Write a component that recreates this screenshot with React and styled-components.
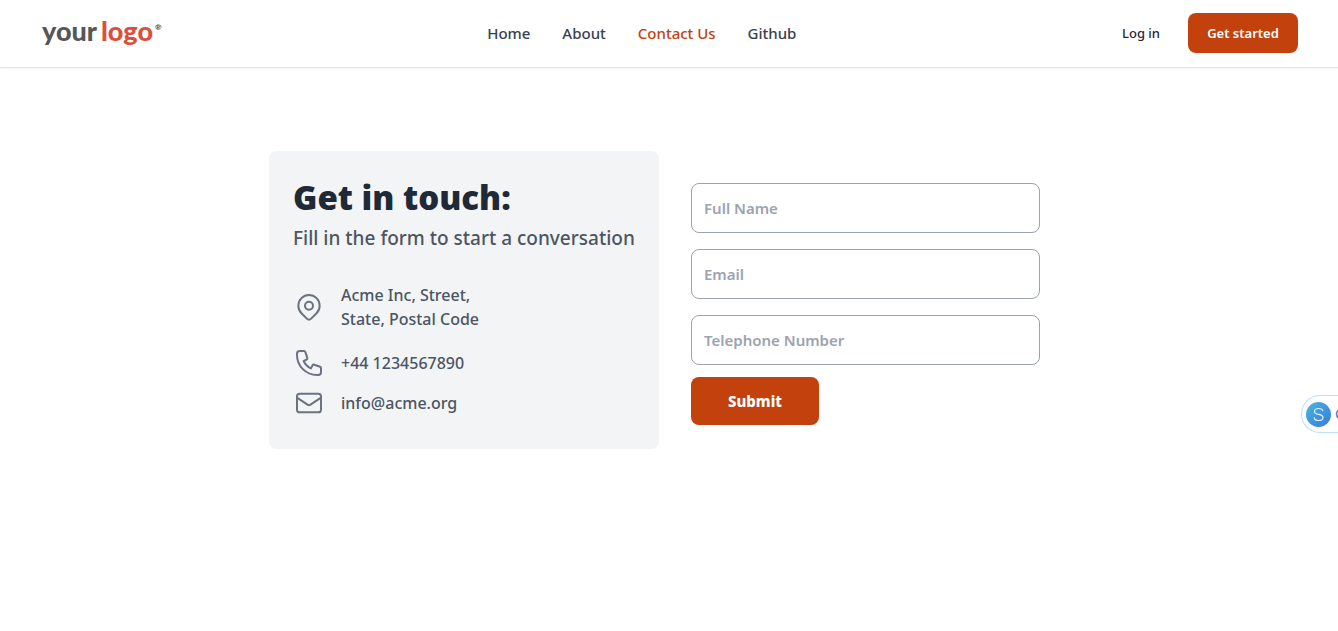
import React from "react";
import styled, { createGlobalStyle } from "styled-components";

const GlobalStyle = createGlobalStyle`
  *, *::before, *::after { box-sizing: border-box; }
  body {
    margin: 0;
    background: #fff;
    color: #1f2937;
    font-family: "Segoe UI", "Noto Sans", "Open Sans", sans-serif;
    font-size: 16px;
    line-height: 24px;
    overflow-x: hidden;
  }
  h1, p, ul { margin: 0; padding: 0; }
  button, input { font: inherit; }
`;

const Header = styled.header`
  display: flex;
  align-items: center;
  justify-content: space-between;
  min-height: 68px;
  padding: 0 40px 2px;
  border-bottom: 1px solid #e5e7eb;
  box-shadow: 0 1px 2px rgba(0, 0, 0, 0.05);
`;

const Logo = styled.a`
  display: flex;
  padding: 0 0 4px 2px;
  color: #555658;
  font-family: Lato, "Open Sans", sans-serif;
  font-size: 27px;
  font-weight: 900;
  line-height: 36px;
  text-decoration: none;
`;

const LogoAccent = styled.span`
  margin-left: 4px;
  color: #dc4f3c;
`;

const LogoMark = styled.span`
  margin-left: 2px;
  font-size: 8px;
  line-height: 28px;
`;

const Nav = styled.nav`
  display: flex;
  gap: 32px;
`;

const NavLink = styled.a`
  color: ${({ $active }) => ($active ? "#c2410c" : "#374151")};
  font-size: 15px;
  font-weight: 500;
  text-decoration: none;
`;

const Actions = styled.div`
  display: flex;
  align-items: center;
  gap: 28px;
`;

const LoginLink = styled.a`
  color: #1f2937;
  font-size: 13px;
  font-weight: 500;
  text-decoration: none;
`;

const Button = styled.button`
  width: ${({ $large }) => ($large ? "128px" : "110px")};
  height: ${({ $large }) => ($large ? "48px" : "40px")};
  padding: 0;
  border: 0;
  border-radius: 8px;
  background: #c2410c;
  color: #fff;
  font-size: ${({ $large }) => ($large ? "15px" : "13px")};
  font-weight: ${({ $large }) => ($large ? 800 : 600)};
  cursor: pointer;
`;

const Main = styled.main`
  display: grid;
  grid-template-columns: 390px minmax(0, 1fr);
  gap: 8px;
  max-width: 800px;
  margin: 83px auto 0;

  @media (max-width: 800px) {
    grid-template-columns: minmax(0, 1fr);
    margin: 32px 16px;
  }
`;

const Card = styled.section`
  padding: 24px;
  border-radius: 8px;
  background: #f3f4f6;
`;

const Title = styled.h1`
  color: #1f2937;
  font-size: 33px;
  font-weight: 900;
  line-height: 45px;
`;

const Lead = styled.p`
  margin-top: 4px;
  color: #4b5563;
  font-size: 19px;
  font-weight: 500;
  line-height: 28px;
  white-space: nowrap;
`;

const ContactList = styled.ul`
  display: grid;
  gap: 8px;
  margin-top: 31px;
  list-style: none;
`;

const ContactItem = styled.li`
  display: flex;
  align-items: center;
  gap: 16px;
  margin-bottom: ${({ $spaced }) => ($spaced ? "8px" : "0")};
  color: #4b5563;
  font-size: 16px;
  font-weight: 500;
`;

const ContactIcon = styled.svg`
  width: 32px;
  height: 32px;
  flex: none;
  fill: none;
  stroke: #6b7280;
  stroke-width: 1.5;
  stroke-linecap: round;
  stroke-linejoin: round;
`;

const Form = styled.form`
  display: flex;
  flex-direction: column;
  gap: 16px;
  padding: 32px 29px 24px 24px;
`;

const Field = styled.input`
  width: 100%;
  height: 50px;
  padding: 0 12px;
  border: 1px solid #9ca3af;
  border-radius: 8px;
  background: #fff;
  color: #1f2937;
  font-size: 15px;
  font-weight: 600;

  &::placeholder {
    color: #9ca3af;
    opacity: 1;
  }
`;

const FormFooter = styled.div`
  display: flex;
  margin-top: -4px;
`;

const Widget = styled.button`
  position: fixed;
  top: 395px;
  right: 0;
  display: flex;
  align-items: center;
  gap: 4px;
  width: 37px;
  height: 38px;
  padding: 0 0 0 4px;
  overflow: hidden;
  border: 1px solid #bfdbfe;
  border-right: 0;
  border-radius: 19px 0 0 19px;
  background: #fff;
  color: #3f6fd8;
  font-size: 14px;
`;

const WidgetIcon = styled.svg`
  width: 25px;
  height: 25px;
  flex: none;
`;

export default function App() {
  return (
    <>
      <GlobalStyle />
      <Header>
        <Logo href="#">
          your<LogoAccent>logo</LogoAccent><LogoMark>®</LogoMark>
        </Logo>
        <Nav aria-label="Main">
          <NavLink href="#">Home</NavLink>
          <NavLink href="#">About</NavLink>
          <NavLink href="#" $active aria-current="page">Contact Us</NavLink>
          <NavLink href="#">Github</NavLink>
        </Nav>
        <Actions>
          <LoginLink href="#">Log in</LoginLink>
          <Button type="button">Get started</Button>
        </Actions>
      </Header>
      <Main>
        <Card>
          <Title>Get in touch:</Title>
          <Lead>Fill in the form to start a conversation</Lead>
          <ContactList>
            <ContactItem $spaced>
              <ContactIcon viewBox="0 0 24 24" aria-hidden="true">
                <path d="M17.657 16.657L13.414 20.9a1.998 1.998 0 01-2.827 0l-4.244-4.243a8 8 0 1111.314 0z" />
                <path d="M15 11a3 3 0 11-6 0 3 3 0 016 0z" />
              </ContactIcon>
              <span>Acme Inc, Street,<br />State, Postal Code</span>
            </ContactItem>
            <ContactItem>
              <ContactIcon viewBox="0 0 24 24" aria-hidden="true">
                <path d="M3 5a2 2 0 012-2h3.28a1 1 0 01.948.684l1.498 4.493a1 1 0 01-.502 1.21l-2.257 1.13a11.042 11.042 0 005.516 5.516l1.13-2.257a1 1 0 011.21-.502l4.493 1.498a1 1 0 01.684.949V19a2 2 0 01-2 2h-1C9.716 21 3 14.284 3 6V5z" />
              </ContactIcon>
              <span>+44 1234567890</span>
            </ContactItem>
            <ContactItem>
              <ContactIcon viewBox="0 0 24 24" aria-hidden="true">
                <path d="M3 8l7.89 5.26a2 2 0 002.22 0L21 8M5 19h14a2 2 0 002-2V7a2 2 0 00-2-2H5a2 2 0 00-2 2v10a2 2 0 002 2z" />
              </ContactIcon>
              <span>info@acme.org</span>
            </ContactItem>
          </ContactList>
        </Card>
        <Form onSubmit={(event) => event.preventDefault()}>
          <Field type="text" name="name" aria-label="Full Name" placeholder="Full Name" />
          <Field type="email" name="email" aria-label="Email" placeholder="Email" />
          <Field type="tel" name="tel" aria-label="Telephone Number" placeholder="Telephone Number" />
          <FormFooter>
            <Button type="submit" $large>Submit</Button>
          </FormFooter>
        </Form>
      </Main>
      <Widget type="button">
        <WidgetIcon viewBox="0 0 25 25" aria-hidden="true">
          <defs>
            <linearGradient id="badge" x1="0" y1="0" x2="1" y2="1">
              <stop offset="0" stopColor="#45b8de" />
              <stop offset="1" stopColor="#3a78dc" />
            </linearGradient>
          </defs>
          <circle cx="12.5" cy="12.5" r="12.5" fill="url(#badge)" />
          <path d="M16.8 9.2C16.5 7.3 14.8 6.5 12.6 6.5c-2.4 0-4.1 1.1-4.1 2.9 0 4.2 8.5 1.8 8.5 6 0 2-1.9 3.1-4.4 3.1s-4.3-1-4.5-3.1" fill="none" stroke="#dff1ff" strokeWidth="1.2" />
        </WidgetIcon>
        <span>C</span>
      </Widget>
    </>
  );
}
